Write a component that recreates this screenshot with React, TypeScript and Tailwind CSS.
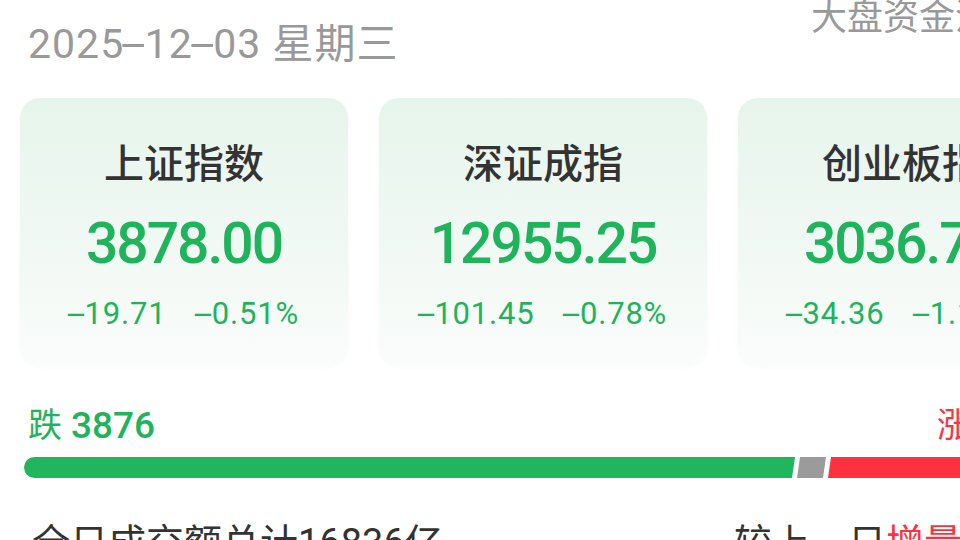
import React from "react";

type Idx = { name: string; value: string; chg: string; pct: string };

const INDEXES: Idx[] = [
  { name: "上证指数", value: "3878.00", chg: "-19.71", pct: "-0.51%" },
  { name: "深证成指", value: "12955.25", chg: "-101.45", pct: "-0.78%" },
  { name: "创业板指", value: "3036.76", chg: "-34.36", pct: "-1.12%" },
];

const FONT = "font-['Roboto','Noto_Sans_CJK_SC',sans-serif]";

// hyphen drawn wide, like the app's own font
const Dash = ({ s = "scale-x-[2.2]" }: { s?: string }) => (
  <span className={`inline-block w-[0.5em] text-center ${s}`}>-</span>
);

const withDash = (t: string, s?: string) =>
  t.split("-").map((p, i) => (
    <React.Fragment key={i}>
      {i > 0 && <Dash s={s} />}
      {p}
    </React.Fragment>
  ));

function Card({ it }: { it: Idx }) {
  return (
    <div className="flex h-[268px] w-[328px] shrink-0 flex-col items-center rounded-[20px] bg-gradient-to-b from-[#e6f5ec] via-[#f0f8f3] to-[#fafcfb] shadow-[0_1px_4px_rgba(0,0,0,0.03)]">
      <div className="mt-[47px] h-[40px] text-[40px] font-medium leading-[40px] text-[#333333]">{it.name}</div>
      <div className="mt-[30px] h-[57px] text-[57px] font-medium leading-[57px] tracking-[-2px] text-[#1fb35c]">{it.value}</div>
      <div className="mt-[26px] flex h-[31px] gap-[30px] text-[31px] leading-[31px] tracking-[0.8px] text-[#1fb35c]">
        <span>{withDash(it.chg)}</span>
        <span>{withDash(it.pct)}</span>
      </div>
    </div>
  );
}

export default function App() {
  return (
    <div className={`h-[540px] w-[960px] overflow-hidden bg-white ${FONT}`}>
      <div className="w-[1086px]">
        {/* header */}
        <div className="flex h-[98px] items-start justify-between pl-[28px] pr-[33px]">
          <div className="pt-[24px] text-[41px] leading-[41px] tracking-[1px] text-[#999999] whitespace-nowrap">
            {withDash("2025-12-03", "scale-x-[2.2]")} 星期三
          </div>
          <div className="flex items-center gap-1 whitespace-nowrap text-[36px] leading-[36px] text-[#999999]">
            大盘资金流向
            <svg width="22" height="22" viewBox="0 0 24 24" fill="none" stroke="#999999" strokeWidth="2.2" strokeLinecap="round" strokeLinejoin="round">
              <path d="M9 5l7 7-7 7" />
            </svg>
          </div>
        </div>

        {/* index cards */}
        <div className="flex gap-[31px] pl-[20px]">
          {INDEXES.map((it) => (
            <Card key={it.name} it={it} />
          ))}
        </div>

        {/* up / down counts */}
        <div className="mt-[41px] flex h-[37px] items-center justify-between pl-[28px] pr-[22px] leading-[37px]">
          <div className="flex items-center text-[#1fb35c]">
            <span className="text-[34px]">跌</span>
            <span className="ml-[9px] text-[37px] font-medium">3876</span>
          </div>
          <div className="flex items-center text-[#ff3141]">
            <span className="text-[34px]">涨</span>
            <span className="ml-[9px] text-[37px] font-medium">1195</span>
          </div>
        </div>

        <div className="mt-[13px] flex h-[21px] px-[24px]">
          <div className="w-[771px] rounded-l-full bg-[#20b65d] [clip-path:polygon(0_0,100%_0,calc(100%_-_3px)_100%,0_100%)]" />
          <div className="ml-[2px] w-[29px] bg-[#9b9b9b] [clip-path:polygon(3px_0,100%_0,calc(100%_-_3px)_100%,0_100%)]" />
          <div className="ml-[2px] flex-1 rounded-r-full bg-[#ff3141] [clip-path:polygon(3px_0,100%_0,100%_100%,0_100%)]" />
        </div>

        {/* turnover */}
        <div className="mt-[46px] flex justify-between pl-[32px] pr-[22px] text-[38px] leading-[38px] whitespace-nowrap text-[#333333]">
          <div>全日成交额总计16836亿</div>
          <div>
            较上一日<span className="text-[#ff3141]">增量823亿</span>
          </div>
        </div>
      </div>
    </div>
  );
}
